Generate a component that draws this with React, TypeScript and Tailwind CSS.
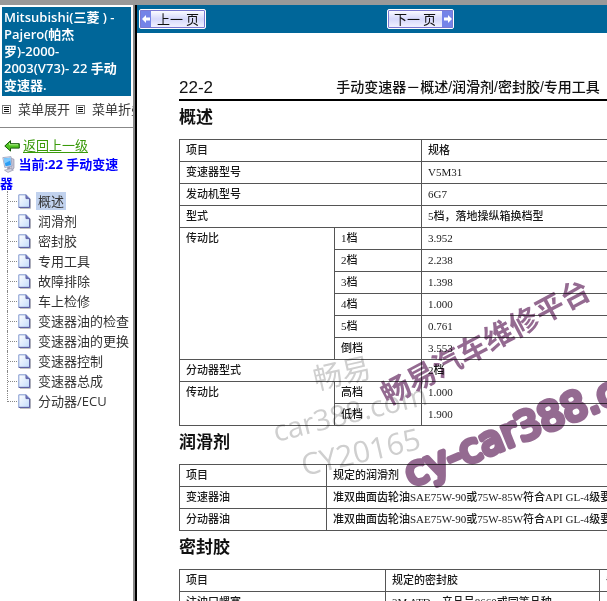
import React from 'react';
import { clsx } from 'clsx';

const treeItems = [
  '概述',
  '润滑剂',
  '密封胶',
  '专用工具',
  '故障排除',
  '车上检修',
  '变速器油的检查',
  '变速器油的更换',
  '变速器控制',
  '变速器总成',
  '分动器/ECU',
];

const gearRatios = [
  ['1档', '3.952'],
  ['2档', '2.238'],
  ['3档', '1.398'],
  ['4档', '1.000'],
  ['5档', '0.761'],
  ['倒档', '3.553'],
];

const cell = 'border border-[#555] px-[6px] align-top leading-[20px] whitespace-nowrap';
const tableClass =
  "w-full table-fixed border-collapse border border-[#333] text-[11px] text-[#1a1a1a] font-medium font-['Liberation_Serif','Noto_Sans_CJK_SC',serif]";

function MenuIcon() {
  return (
    <svg width="9" height="9" viewBox="0 0 9 9" className="shrink-0" shapeRendering="crispEdges">
      <rect x="0.5" y="0.5" width="8" height="8" fill="#fff" stroke="#777" />
      <path d="M2 2.5h5M2 4.5h5M2 6.5h5" stroke="#111" />
    </svg>
  );
}

function BackIcon() {
  return (
    <svg width="16" height="12" viewBox="0 0 16 12" className="shrink-0">
      <path d="M6.5 0.7v3h8.8v4.4H6.5v3L0.8 6z" fill="#4fc321" stroke="#14580a" strokeLinejoin="round" />
      <path d="M5.5 3v1.8h8.5" fill="none" stroke="#b2f08c" />
    </svg>
  );
}

function ComputerIcon() {
  return (
    <svg width="13" height="17" viewBox="0 0 13 17" className="inline-block align-[-4px]">
      <path d="M8.5 2l3.5 1.2v9L9 14z" fill="#c9c7d6" stroke="#88869c" strokeWidth="0.6" />
      <path d="M0.8 1.6L9 0.6l1 9.4-7.2 1.5z" fill="#e4e6f2" stroke="#8c94b4" strokeWidth="0.7" />
      <path d="M1.8 2.6l6.4-0.8 0.8 7.4-5.5 1.1z" fill="#2b9df4" />
      <path d="M1.8 2.6l6.4-0.8 0.3 2.6-6 3z" fill="#7cc9ff" />
      <path d="M5 11.3l3-0.6 0.4 2.2-3 0.6z" fill="#9a9ab2" />
      <path d="M2.5 14.2l6-1.6 3 1.4-5.5 2.4z" fill="#d6d6e4" stroke="#8a8aa2" strokeWidth="0.6" />
    </svg>
  );
}

function PageIcon() {
  return (
    <svg width="13" height="15" viewBox="0 0 13 15" className="shrink-0">
      <defs>
        <linearGradient id="sheet" x1="0" y1="0" x2="1" y2="1">
          <stop offset="0" stopColor="#fff" />
          <stop offset="1" stopColor="#c2dcfb" />
        </linearGradient>
      </defs>
      <path d="M2 14.4h10.5V5" fill="none" stroke="#bbb" />
      <path d="M0.8 0.8h7.4l3.4 3.6v9H0.8z" fill="url(#sheet)" stroke="#7f98d0" />
      <path d="M8 0.8v3.8h3.6v8.8H0.8" fill="none" stroke="#5a5c9e" />
      <path d="M8 1l3.4 3.6H8z" fill="#6a6fb5" />
    </svg>
  );
}

function Sidebar() {
  return (
    <aside className="w-[133px] shrink-0 overflow-hidden bg-white text-[13px] font-['Open_Sans','Noto_Sans_CJK_SC',sans-serif]">
      <h1 className="mx-[2px] mt-[2px] h-[89px] bg-[#006699] px-[2px] pt-[2px] text-[13px] leading-[17px] font-semibold text-white">
        Mitsubishi(三菱 ) -<br />
        Pajero(帕杰
        <br />
        罗)-2000-
        <br />
        2003(V73)- 22 手动
        <br />
        变速器.
      </h1>
      <div className="flex h-8 items-center border-b border-[#888] px-[2px] pb-1 whitespace-nowrap text-[#333]">
        <MenuIcon />
        <button type="button" className="ml-[7px] shrink-0">菜单展开</button>
        <span className="ml-[6px] flex"><MenuIcon /></span>
        <button type="button" className="ml-[7px] shrink-0">菜单折叠</button>
      </div>
      <div className="mt-[9px] flex h-[18px] items-center gap-[3px] pl-1">
        <BackIcon />
        <a href="#" className="text-[#3a9a0a] underline underline-offset-2">返回上一级</a>
      </div>
      <div className="h-[36px] font-bold text-[#0000ff]">
        <p className="pl-[2px] leading-[19px]">
          <ComputerIcon /> 当前:22 手动变速
        </p>
        <p className="leading-[19px]">器</p>
      </div>
      <ul className="pl-[7px]">
        {treeItems.map((item, i) => (
          <li key={item} className="flex h-5 items-center whitespace-nowrap">
            <span
              className={clsx(
                'w-px border-l border-dotted border-[#888]',
                i === treeItems.length - 1 ? 'h-[11px] self-start' : 'h-5'
              )}
            />
            <span className="mr-[1px] w-[9px] border-t border-dotted border-[#888]" />
            <PageIcon />
            <a
              href="#"
              className={clsx('ml-[5px] px-[2px] leading-[18px] text-[#333]', i === 0 && 'bg-[#c1d2ee]')}
            >
              {item}
            </a>
          </li>
        ))}
      </ul>
    </aside>
  );
}

function PagerButton({ label, direction }: { label: string; direction: 'prev' | 'next' }) {
  const isPrev = direction === 'prev';
  return (
    <button
      type="button"
      className={clsx(
        'flex h-5 w-[67px] items-stretch overflow-hidden rounded-[2px] border border-white bg-gradient-to-b from-white via-[#d5d8fb] to-[#f4f4ff] outline-1 -outline-offset-2 outline-[#7a78d0]',
        !isPrev && 'flex-row-reverse'
      )}
    >
      <span className="flex w-[11px] items-center justify-center bg-[#7484e8]">
        <svg width="8" height="8" viewBox="0 0 8 8" className={isPrev ? '' : 'rotate-180'}>
          <path d="M4 0v2.6h4v2.8H4V8L0 4z" fill="#fff" />
        </svg>
      </span>
      <span className="flex-1 text-center font-['Noto_Sans_CJK_SC',sans-serif] text-[13px] leading-[17px] whitespace-nowrap text-[#111]">
        {label}
      </span>
    </button>
  );
}

function SpecTable() {
  return (
    <table className={tableClass}>
      <colgroup>
        <col className="w-[155px]" />
        <col className="w-[87px]" />
        <col />
      </colgroup>
      <tbody>
        <tr className="h-[22px]">
          <td colSpan={2} className={cell}>项目</td>
          <td className={cell}>规格</td>
        </tr>
        <tr className="h-[22px]">
          <td colSpan={2} className={cell}>变速器型号</td>
          <td className={cell}>V5M31</td>
        </tr>
        <tr className="h-[22px]">
          <td colSpan={2} className={cell}>发动机型号</td>
          <td className={cell}>6G7</td>
        </tr>
        <tr className="h-[22px]">
          <td colSpan={2} className={cell}>型式</td>
          <td className={cell}>5档，落地操纵箱换档型</td>
        </tr>
        {gearRatios.map(([gear, ratio], i) => (
          <tr key={gear} className="h-[22px]">
            {i === 0 && <td rowSpan={gearRatios.length} className={cell}>传动比</td>}
            <td className={cell}>{gear}</td>
            <td className={cell}>{ratio}</td>
          </tr>
        ))}
        <tr className="h-[22px]">
          <td colSpan={2} className={cell}>分动器型式</td>
          <td className={cell}>2档</td>
        </tr>
        <tr className="h-[22px]">
          <td rowSpan={2} className={cell}>传动比</td>
          <td className={cell}>高档</td>
          <td className={cell}>1.000</td>
        </tr>
        <tr className="h-[22px]">
          <td className={cell}>低档</td>
          <td className={cell}>1.900</td>
        </tr>
      </tbody>
    </table>
  );
}

function SectionTitle({ children }: { children: React.ReactNode }) {
  return <h2 className="h-[38px] text-[17px] leading-[34px] font-bold text-[#111]">{children}</h2>;
}

function Watermark() {
  return (
    <svg
      width="470"
      height="568"
      viewBox="137 33 470 568"
      className="pointer-events-none absolute top-0 left-0 mix-blend-multiply"
    >
      <g fill="#cfcfcf" fontFamily="'Open Sans','Noto Sans CJK SC',sans-serif" fontSize="29">
        <text transform="translate(316 390) rotate(-13)">畅易</text>
        <text transform="translate(276 442) rotate(-14)">car388.com</text>
        <text transform="translate(304 476) rotate(-13)" fontSize="30">CY20165</text>
      </g>
      <g fill="#946a91" stroke="#946a91" strokeLinejoin="round" strokeLinecap="round">
        <text
          transform="translate(388 406) rotate(-28)"
          fontFamily="'Noto Sans CJK SC',sans-serif"
          fontWeight="700"
          fontSize="29"
          strokeWidth="0"
        >
          畅易汽车维修平台
        </text>
        <text
          transform="translate(411 487) rotate(-22)"
          fontFamily="'DejaVu Sans',sans-serif"
          fontSize="39"
          strokeWidth="5"
        >
          cy-car388.com
        </text>
      </g>
    </svg>
  );
}

export default function App() {
  return (
    <div className="flex h-screen flex-col overflow-hidden border-t-[5px] border-[#999] bg-white">
      <div className="flex min-h-0 flex-1">
        <Sidebar />
        <div className="w-1 shrink-0 border-l-2 border-[#888] bg-black" />
        <main className="flex min-w-0 flex-1 flex-col font-['Liberation_Sans','Noto_Sans_CJK_SC',sans-serif]">
          <nav className="flex h-7 shrink-0 items-center bg-[#006699] pl-[2px]">
            <div className="w-[53%]">
              <PagerButton label="上一 页" direction="prev" />
            </div>
            <PagerButton label="下一 页" direction="next" />
          </nav>
          <div className="relative min-h-0 flex-1 overflow-hidden">
            <article className="w-[620px] pt-[42px] pl-[42px]">
              <header className="grid h-[26px] grid-cols-[1fr_auto_1fr] items-center border-b-2 border-black">
                <span className="text-[17px] text-[#111]">22-2</span>
                <span className="text-[14px] font-medium text-[#111]">
                  手动变速器－概述/润滑剂/密封胶/专用工具
                </span>
              </header>

              <SectionTitle>概述</SectionTitle>
              <SpecTable />

              <SectionTitle>润滑剂</SectionTitle>
              <table className={tableClass}>
                <colgroup>
                  <col className="w-[147px]" />
                  <col />
                </colgroup>
                <tbody>
                  <tr className="h-[22px]">
                    <td className={cell}>项目</td>
                    <td className={cell}>规定的润滑剂</td>
                  </tr>
                  {['变速器油', '分动器油'].map((name) => (
                    <tr key={name} className="h-[22px]">
                      <td className={cell}>{name}</td>
                      <td className={cell}>准双曲面齿轮油SAE75W-90或75W-85W符合API GL-4级要求</td>
                    </tr>
                  ))}
                </tbody>
              </table>

              <SectionTitle>密封胶</SectionTitle>
              <table className={tableClass}>
                <colgroup>
                  <col className="w-[206px]" />
                  <col className="w-[214px]" />
                  <col />
                </colgroup>
                <tbody>
                  <tr className="h-[22px]">
                    <td className={cell}>项目</td>
                    <td className={cell}>规定的密封胶</td>
                    <td className={cell}>备注</td>
                  </tr>
                  <tr className="h-[22px]">
                    <td className={cell}>注油口螺塞</td>
                    <td className={cell}>3M ATD，产品号8660或同等品种</td>
                    <td className={cell}></td>
                  </tr>
                </tbody>
              </table>
            </article>
            <Watermark />
          </div>
        </main>
      </div>
    </div>
  );
}
